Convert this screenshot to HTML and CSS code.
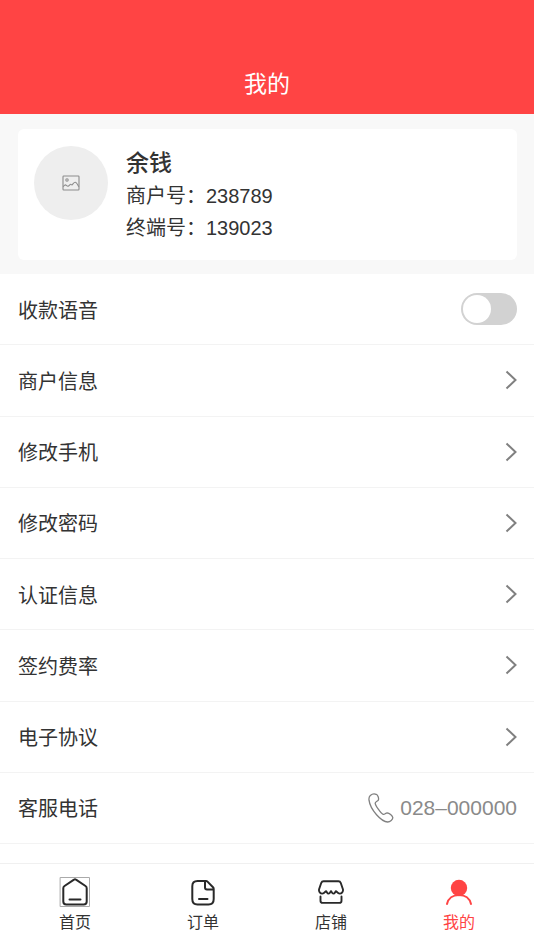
FILE: index.html
```html
<!DOCTYPE html>
<html lang="zh-CN">
<head>
<meta charset="utf-8">
<meta name="viewport" content="width=device-width, initial-scale=1">
<title>我的</title>
<link rel="stylesheet" href="styles.css">
</head>
<body>
<header class="header"><h1 class="header-title">我的</h1></header>
<main>
  <section class="profile">
    <div class="card">
      <div class="avatar">
        <svg width="18" height="16" viewBox="0 0 18 16" fill="none" stroke="#8c8c8c" stroke-width="1.1" stroke-linejoin="round"><rect x="1" y="1" width="16" height="14" rx="0.7"/><circle cx="5" cy="5" r="1.2"/><path d="M1.200 11.800C2.500 9.500 3.400 9.500 4.600 10.600S6.500 11.300 7.800 9.800S9.400 10.500 10.200 9.800S12 7.200 13.200 7.300S15.500 9.300 16.800 11.800"/></svg>
      </div>
      <div class="info">
        <h2 class="name">余钱</h2>
        <p class="detail">商户号：238789</p>
        <p class="detail">终端号：139023</p>
      </div>
    </div>
  </section>
  <div class="list">
    <div class="row"><label for="voice">收款语音</label><input class="switch" id="voice" type="checkbox" role="switch"></div>
    <a class="row" href="#merchant">商户信息<svg class="chevron" viewBox="0 0 12 20"><path d="M1.5 1.5L10.5 10l-9 8.500"/></svg></a>
    <a class="row" href="#mobile">修改手机<svg class="chevron" viewBox="0 0 12 20"><path d="M1.5 1.5L10.5 10l-9 8.500"/></svg></a>
    <a class="row" href="#password">修改密码<svg class="chevron" viewBox="0 0 12 20"><path d="M1.5 1.5L10.5 10l-9 8.500"/></svg></a>
    <a class="row" href="#verify">认证信息<svg class="chevron" viewBox="0 0 12 20"><path d="M1.5 1.5L10.5 10l-9 8.500"/></svg></a>
    <a class="row" href="#rates">签约费率<svg class="chevron" viewBox="0 0 12 20"><path d="M1.5 1.5L10.5 10l-9 8.500"/></svg></a>
    <a class="row" href="#agreement">电子协议<svg class="chevron" viewBox="0 0 12 20"><path d="M1.5 1.5L10.5 10l-9 8.500"/></svg></a>
    <a class="row" href="tel:028000000">客服电话<span class="phone"><svg width="26" height="30" viewBox="0 0 26 30" fill="none" stroke="#808080" stroke-width="1.300" stroke-linejoin="round"><path d="M2.300 2.400C3.800 1.100 6.700.600 8.200 1.300C9.900 2.200 11 5.300 10.400 6.900C9.900 8.200 7.400 8.500 7.200 10.100C7.100 12.200 12.900 20.400 15.200 21.300C16.800 21.800 17.300 19.900 19.200 19.900C21.200 20 24.500 22.700 24.800 24.600C25 26.500 22.200 28.800 19.600 29C13.600 28.900 2.300 17 1 7.200C.800 5.200 1 3.500 2.300 2.400Z"/></svg>028–000000</span></a>
  </div>
</main>
<nav class="tabs">
  <a class="tab" href="#home"><svg width="32" height="32" viewBox="0 0 32 32" fill="none" stroke="#292929" stroke-width="2" stroke-linecap="round" stroke-linejoin="round"><rect x="1.500" y="1.500" width="29" height="29" stroke="#aaa" stroke-width="1"/><path d="M15 3.700Q16 3 17 3.700L26.500 10Q27.700 10.800 27.700 12.200V25.500Q27.700 28.500 24.700 28.500H7.300Q4.300 28.500 4.300 25.500V12.200Q4.300 10.800 5.500 10ZM10.500 23.500h11"/></svg>首页</a>
  <a class="tab" href="#orders"><svg width="32" height="32" viewBox="0 0 32 32" fill="none" stroke="#292929" stroke-width="2" stroke-linecap="round" stroke-linejoin="round"><path d="M19 5H10.500Q5.300 5 5.300 10.200V23Q5.300 28.500 10.500 28.500H21.500Q26.700 28.500 26.700 23V13Q26.700 12 26 11.300L20.500 5.600Q19.900 5 19 5Q18 5 18 6V11.600Q18 13.600 20 13.600H26.500M12 23h8.500"/></svg>订单</a>
  <a class="tab" href="#shop"><svg width="32" height="32" viewBox="0 0 32 32" fill="none" stroke="#292929" stroke-width="1.900" stroke-linecap="round" stroke-linejoin="round"><path d="M8.500 5.200H23.500Q25.100 5.200 25.700 6.800L28 13.500C28.400 15.500 26.800 17.600 24.700 17.600C22.500 17.600 21.700 15.300 21 15.300C20.200 15.300 20 17.600 18.400 17.600C16.800 17.600 16.700 15.300 16 15.300C15.300 15.300 15.200 17.600 13.600 17.600C12 17.600 11.800 15.300 11 15.300C10.300 15.300 9.500 17.600 7.300 17.600C5.200 17.600 3.600 15.500 4 13.500L6.300 6.800Q6.900 5.200 8.500 5.200ZM5.500 20.500V24.700Q5.500 26.900 7.700 26.900H24.300Q26.500 26.900 26.500 24.700V20.500"/></svg>店铺</a>
  <a class="tab tab-active" href="#mine" aria-current="page"><svg width="32" height="32" viewBox="0 0 32 32"><circle cx="16" cy="12" r="8.200" fill="#ff4444"/><path d="M4 28C5.200 22.200 10 18.900 16 18.900S26.800 22.200 28 28" fill="none" stroke="#ff4444" stroke-width="2" stroke-linecap="round"/></svg>我的</a>
</nav>
</body>
</html>
```
FILE: styles.css
```css
* {
  box-sizing: border-box;
}

body {
  margin: 0;
  min-height: 100vh;
  display: flex;
  flex-direction: column;
  background: #fff;
  color: #333;
  font-family: "Liberation Sans", "Noto Sans CJK SC", sans-serif;
  font-size: 20px;
}

h1,
h2,
p {
  margin: 0;
}

a {
  color: inherit;
  text-decoration: none;
}

svg {
  display: block;
  flex: none;
}

.header {
  padding: 68px 18px 14px;
  background: #ff4444;
  color: #fff;
  text-align: center;
}

.header-title {
  font-size: 23px;
  line-height: 32px;
  font-weight: 400;
}

.profile {
  padding: 15px 17px 14px 18px;
  background: #f8f8f8;
}

.card {
  display: flex;
  gap: 18px;
  padding: 17px 16px 16px;
  border-radius: 6px;
  background: #fff;
}

.avatar {
  display: flex;
  flex: none;
  align-items: center;
  justify-content: center;
  width: 74px;
  height: 74px;
  border-radius: 50%;
  background: #eee;
}

.name {
  font-size: 23px;
  line-height: 34px;
  font-weight: 500;
}

.detail {
  line-height: 32px;
}

.list {
  display: grid;
  grid-template-rows: repeat(8, 1fr);
  min-height: 570px;
}

.row {
  display: flex;
  align-items: center;
  justify-content: space-between;
  padding: 0 17px 0 18px;
  border-bottom: 1px solid #f3f3f3;
}

.switch {
  appearance: none;
  display: flex;
  align-items: center;
  width: 56px;
  height: 32px;
  margin: 0;
  padding: 2px;
  border-radius: 16px;
  background: #d2d2d2;
}

.switch::before {
  content: "";
  width: 28px;
  height: 28px;
  border-radius: 50%;
  background: #fff;
}

.switch:checked {
  justify-content: flex-end;
  background: #ff4444;
}

.chevron {
  width: 12px;
  height: 20px;
  fill: none;
  stroke: #808080;
  stroke-width: 2;
}

.phone {
  display: flex;
  align-items: center;
  gap: 6px;
  color: #8a8a8a;
  font-size: 21px;
}

.tabs {
  display: flex;
  margin-top: auto;
  padding: 12px 11px 13px;
  border-top: 1px solid #f0f0f0;
}

.tab {
  display: flex;
  flex: 1;
  flex-direction: column;
  align-items: center;
  gap: 1px;
  font-size: 16px;
  line-height: 28px;
}

.tab-active {
  color: #ff4444;
}
```
